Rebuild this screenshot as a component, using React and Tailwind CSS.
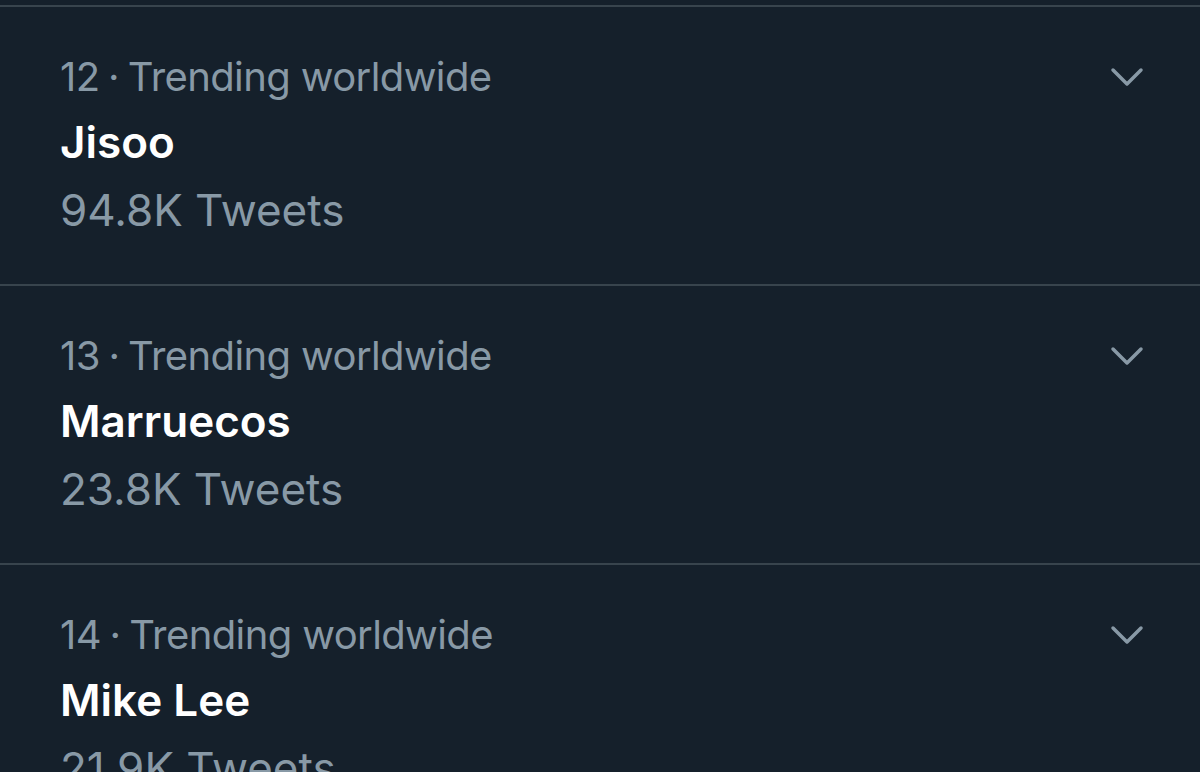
const trends = [
  { rank: 12, name: "Jisoo", count: "94.8K Tweets" },
  { rank: 13, name: "Marruecos", count: "23.8K Tweets" },
  { rank: 14, name: "Mike Lee", count: "21.9K Tweets" },
];

const Chevron = () => (
  <svg width="34" height="24" viewBox="0 0 34 24" fill="none" className="mt-[59px] mr-[56px] shrink-0">
    <path d="M3 4 L17 18 L31 4" stroke="#8899a6" strokeWidth="3.5" strokeLinecap="round" strokeLinejoin="round" />
  </svg>
);

const App = () => {
  return (
    <div
      className="h-[772px] w-[1200px] overflow-hidden bg-[#15202b] pt-[5px]"
      style={{ fontFamily: "Inter, 'Liberation Sans', sans-serif" }}
    >
      {trends.map((t) => (
        <div key={t.rank} className="border-t-2 border-[#38444d] h-[279px] flex items-start justify-between">
          <div className="pl-[60px] pt-[39px]">
            <div className="text-[40px] leading-[62px] text-[#8899a6] tracking-[-0.6px]">
              {t.rank}
              <span className="mx-[-2px]"> · </span>
              Trending worldwide
            </div>
            <div className="text-[44px] leading-[68px] font-semibold text-white">{t.name}</div>
            <div className="text-[44px] leading-[68px] text-[#8899a6]">{t.count}</div>
          </div>
          <Chevron />
        </div>
      ))}
    </div>
  );
};

export default App;
